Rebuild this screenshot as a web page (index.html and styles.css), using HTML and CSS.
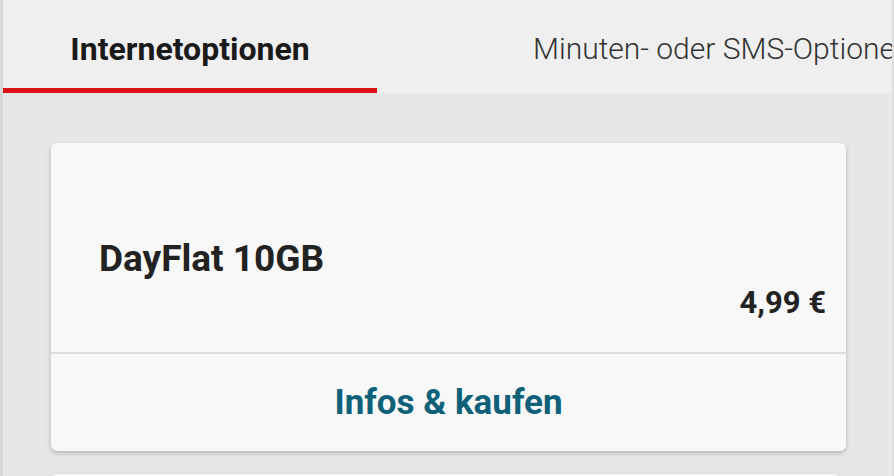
FILE: index.html
```html
<!DOCTYPE html>
<html lang="de">
<head>
    <meta charset="UTF-8">
    <meta name="viewport" content="width=device-width, initial-scale=1.0">
    <link rel="stylesheet" href="styles.css">
</head>
<body>
    <div class="page">
        <!-- Tab bar -->
        <div class="tabs">
            <div class="tab tab-active">Internetoptionen</div>
            <div class="tab tab-other">Minuten- oder SMS-Optionen</div>
        </div>

        <div class="offers">
            <div class="offer-card">
                <div class="offer-main">
                    <div class="offer-title">DayFlat 10GB</div>
                    <div class="offer-price">4,99 €</div>
                </div>
                <div class="offer-action">Infos &amp; kaufen</div>
            </div>
            <div class="offer-card offer-next"></div>
        </div>
    </div>
</body>
</html>
```

FILE: styles.css
```css
html, body {
    margin: 0;
    padding: 0;
    height: 100%;
}

body {
    font-family: Roboto, "Open Sans", Arial, sans-serif;
    background: #e7e7e7;
    color: #222;
    overflow: hidden;
}

.page {
    height: 100%;
    border-left: 3px solid #d9d9d9;
    border-right: 2px solid #dedede;
    box-sizing: border-box;
}

.tabs {
    display: flex;
    background: #efefef;
    height: 93px;
    overflow: hidden;
    white-space: nowrap;
}

.tab {
    box-sizing: border-box;
    height: 93px;
    padding-top: 29px;
    line-height: 40px;
    font-size: 32px;
    flex-shrink: 0;
}

.tab-active {
    width: 374px;
    text-align: center;
    font-weight: 700;
    color: #1a1a1a;
    border-bottom: 5px solid #d8141a;
}

.tab-other {
    padding-left: 156px;
    font-size: 30px;
    font-weight: 300;
    color: #333;
}

.offers {
    padding: 50px 0 0 48px;
    display: flex;
    flex-direction: column;
    gap: 23px;
}

.offer-card {
    width: 795px;
    background: #f8f8f8;
    border-radius: 6px;
    box-shadow: 0 2px 5px rgba(0, 0, 0, 0.22);
}

.offer-main {
    padding: 93px 20px 31px 48px;
    border-bottom: 2px solid #dcdcdc;
}

.offer-title {
    font-size: 37px;
    font-weight: 700;
    line-height: 46px;
    color: #222;
}

.offer-price {
    margin-top: 3px;
    text-align: right;
    font-size: 31px;
    font-weight: 700;
    line-height: 36px;
    color: #222;
}

.offer-action {
    padding: 28px 0 27px;
    line-height: 42px;
    text-align: center;
    font-size: 35px;
    font-weight: 700;
    color: #0e6179;
}

.offer-next {
    height: 60px;
    width: 789px;
}
```
